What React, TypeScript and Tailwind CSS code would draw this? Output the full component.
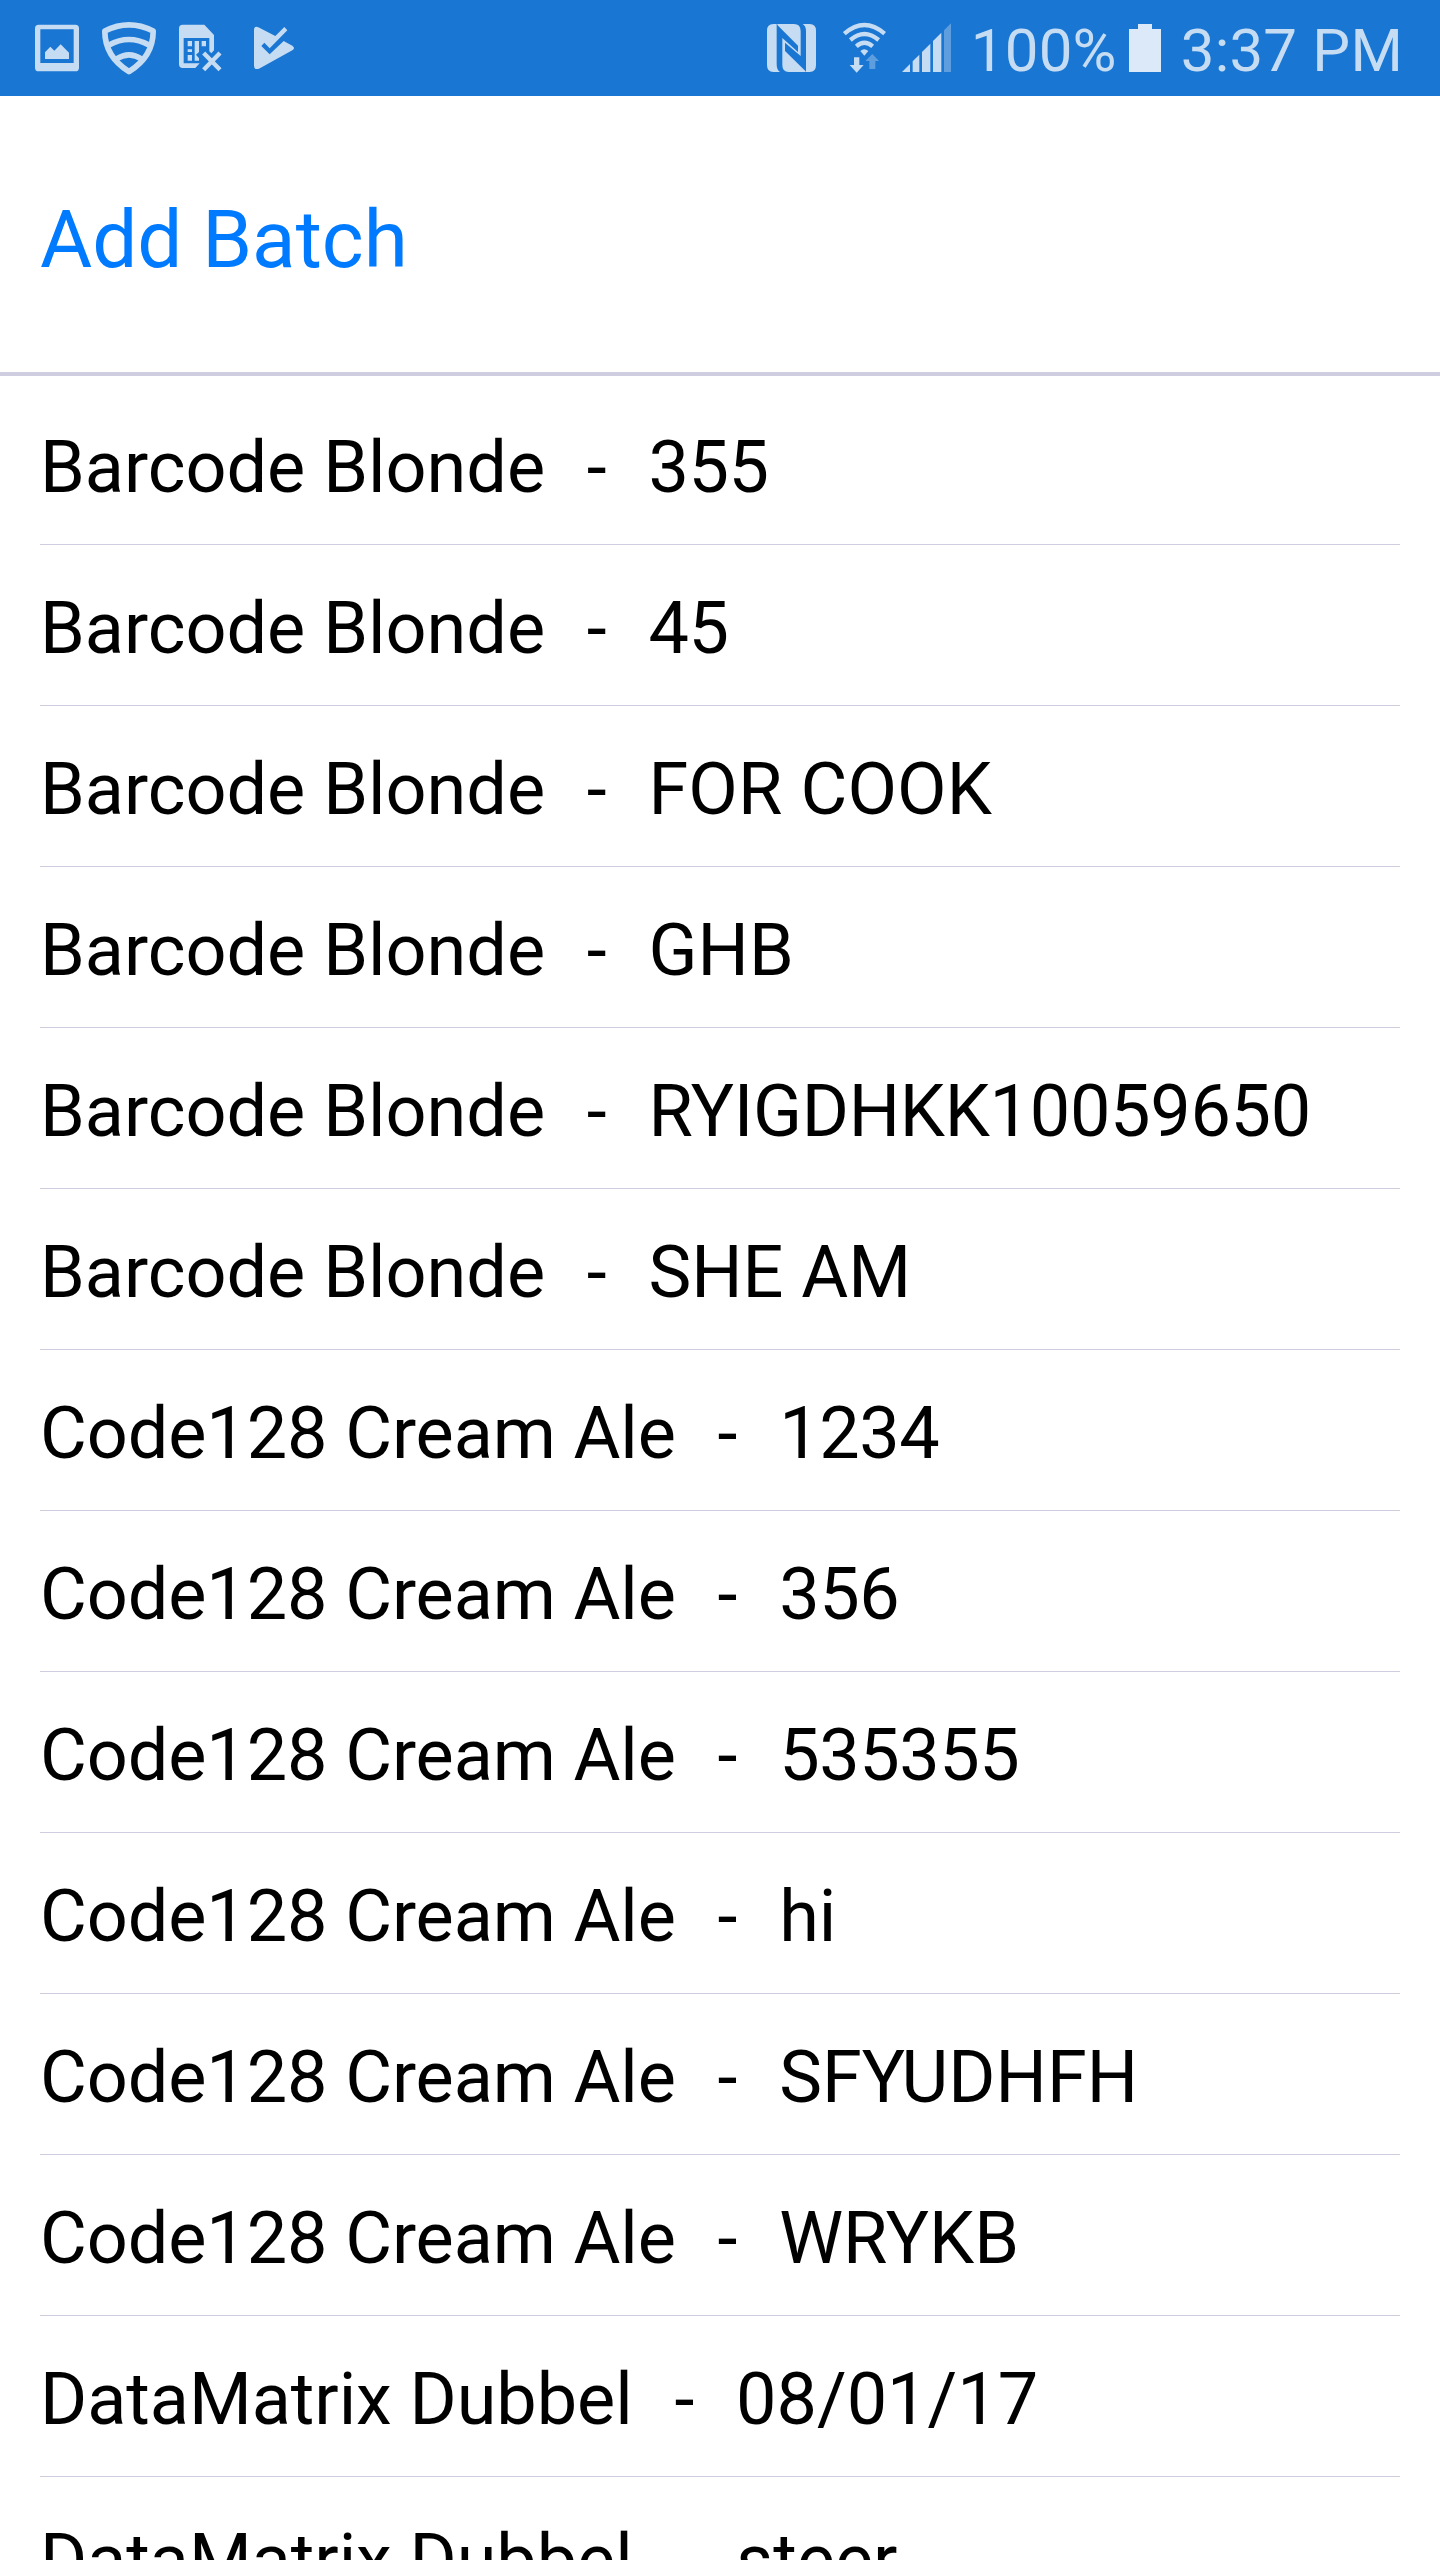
const BLONDE = { label: 'Barcode Blonde', tracking: 'tracking-normal' };
const CREAM_ALE = { label: 'Code128 Cream Ale', tracking: 'tracking-[-0.1px]' };
const DUBBEL = { label: 'DataMatrix Dubbel', tracking: 'tracking-[-0.06px]' };

const DIGITS = 'tracking-[-0.45px]';

const batches = [
  { beer: BLONDE, code: '355', tracking: DIGITS },
  { beer: BLONDE, code: '45', tracking: DIGITS },
  { beer: BLONDE, code: 'FOR COOK', tracking: 'tracking-[0.1px]' },
  { beer: BLONDE, code: 'GHB', tracking: 'tracking-normal' },
  { beer: BLONDE, code: 'RYIGDHKK10059650', tracking: 'tracking-[-0.3px]' },
  { beer: BLONDE, code: 'SHE AM', tracking: 'tracking-normal' },
  { beer: CREAM_ALE, code: '1234', tracking: DIGITS },
  { beer: CREAM_ALE, code: '356', tracking: DIGITS },
  { beer: CREAM_ALE, code: '535355', tracking: DIGITS },
  { beer: CREAM_ALE, code: 'hi', tracking: 'tracking-normal' },
  { beer: CREAM_ALE, code: 'SFYUDHFH', tracking: 'tracking-normal' },
  { beer: CREAM_ALE, code: 'WRYKB', tracking: 'tracking-normal' },
  { beer: DUBBEL, code: '08/01/17', tracking: 'tracking-normal' },
  { beer: DUBBEL, code: 'steer', tracking: 'tracking-normal' },
];

function PictureIcon() {
  return (
    <svg className="h-24 w-11" viewBox="45 -30 132 288" fill="currentColor">
      <path fillRule="evenodd" d="M56 44H166Q177 44 177 55V173Q177 184 166 184H56Q45 184 45 173V55Q45 44 56 44ZM61 58V159H161V58Z" />
      <path d="M75 147V127L91 110L103 122L122 103L147 128V147Z" />
    </svg>
  );
}

function ShieldIcon() {
  return (
    <svg className="ml-[23px] h-24 w-[54px]" viewBox="246 -30 162 288" fill="none" stroke="currentColor" strokeWidth="17" strokeLinejoin="round">
      <path d="M254.500 63Q327 26 399.500 63Q400 139 327 185Q254 139 254.500 63Z" />
      <path d="M267 105Q327 72 387 105M289 147Q327 122 365 147" />
    </svg>
  );
}

function SimErrorIcon() {
  return (
    <svg className="ml-[23px] h-24 w-[43px]" viewBox="57 -30 129 288" fill="currentColor">
      <path fillRule="evenodd" d="M68 44H133L162 75V121L154 130L148 124V84H71V160H119L106 174H68Q57 174 57 163V55Q57 44 68 44Z" />
      <path d="M83 93H96V109H83ZM83 118H96V126H83ZM83 135H96V152H83ZM104 93H117V126L108 134L117 145V152H104ZM125 93H138V109H125Z" />
      <path d="M131 129L180 179M180 129L131 179" stroke="currentColor" strokeWidth="13" />
    </svg>
  );
}

function PlayCheckIcon() {
  return (
    <svg className="ml-8 h-24 w-10" viewBox="282 -30 120 288" fill="currentColor">
      <path d="M282 60Q282 47 295 52L346 78L373 51L382 61L329 115L313 98L304 108L329 133L371 93L397 107Q407 114 397 121L297 176Q282 181 282 167Z" />
    </svg>
  );
}

function NfcIcon() {
  return (
    <svg className="h-24 w-[49px]" viewBox="51 -30 147 288" fill="currentColor">
      <path d="M80 42V162Q80 180 90 186H70Q51 186 51 166V62Q51 42 70 42Z" />
      <path d="M82 42H132Q152 42 152 64V138L105 98V123L167 184V186H116Q97 186 97 166V84L144 126V107L82 45Z" />
      <path d="M158 42H179Q198 42 198 62V166Q198 186 179 186H168V64Q168 48 158 42Z" />
    </svg>
  );
}

function WifiIcon() {
  return (
    <svg className="ml-[27px] h-24 w-[43px]" viewBox="279 -30 129 288" fill="none" stroke="currentColor" strokeWidth="13">
      <path d="M283 71Q343 19 404 71M301 90Q343 54 386 90M319 109Q343 88 368 109" />
      <path d="M331 123Q343 112 355 123L343 137Z" fill="currentColor" stroke="none" />
      <path d="M312 142H328V165H341L320 188L299 165H312Z" fill="currentColor" stroke="none" />
      <path d="M367 132L387 153H376V177H358V153H346Z" fill="currentColor" stroke="none" fillOpacity="0.4" />
    </svg>
  );
}

function SignalIcon() {
  return (
    <svg className="ml-4 h-24 w-[49px]" viewBox="456 -30 147 288" fill="currentColor">
      <path d="M456 186L480 162V186ZM488 186V154L508 134V186ZM516 186V126L541 101V186ZM549 186V93L574 68V186Z" />
      <path d="M582 186V61L603 40V186Z" fillOpacity="0.4" />
    </svg>
  );
}

function BatteryIcon() {
  return (
    <svg className="ml-3 h-24 w-8 text-[#dce9f8]" viewBox="507 -30 96 288" fill="currentColor">
      <path d="M507 57H534V42H576V57H603V186H507Z" />
    </svg>
  );
}

export default function App() {
  return (
    <div className="flex h-[2560px] w-[1440px] flex-col overflow-hidden bg-white font-['Roboto',sans-serif]">
      <header className="flex h-24 shrink-0 justify-between bg-[#1976d3] pr-[37px] pl-[35px] text-[#c5dcf3]">
        <div className="flex">
          <PictureIcon />
          <ShieldIcon />
          <SimErrorIcon />
          <PlayCheckIcon />
        </div>
        <div className="flex text-[60px] leading-[102px] tracking-[0.2px] whitespace-nowrap">
          <NfcIcon />
          <WifiIcon />
          <SignalIcon />
          <span className="ml-5">100%</span>
          <BatteryIcon />
          <span className="ml-5">3:37 PM</span>
        </div>
      </header>
      <div className="flex h-[280px] shrink-0 items-center border-b-4 border-[#cfcee0] px-10 pt-3">
        <button className="text-[80px] leading-[94px] text-[#007aff]">Add Batch</button>
      </div>
      <ul className="shrink-0 px-10 pt-2">
        {batches.map(({ beer, code, tracking }) => (
          <li
            key={beer.label + code}
            className="h-[161px] border-b border-[#cfcee0] pt-[42px] text-[72px] leading-[84px] whitespace-pre text-black"
          >
            <span className={beer.tracking}>{beer.label}</span>
            <span className="mx-[6px]">{'  -  '}</span>
            <span className={tracking}>{code}</span>
          </li>
        ))}
      </ul>
    </div>
  );
}
